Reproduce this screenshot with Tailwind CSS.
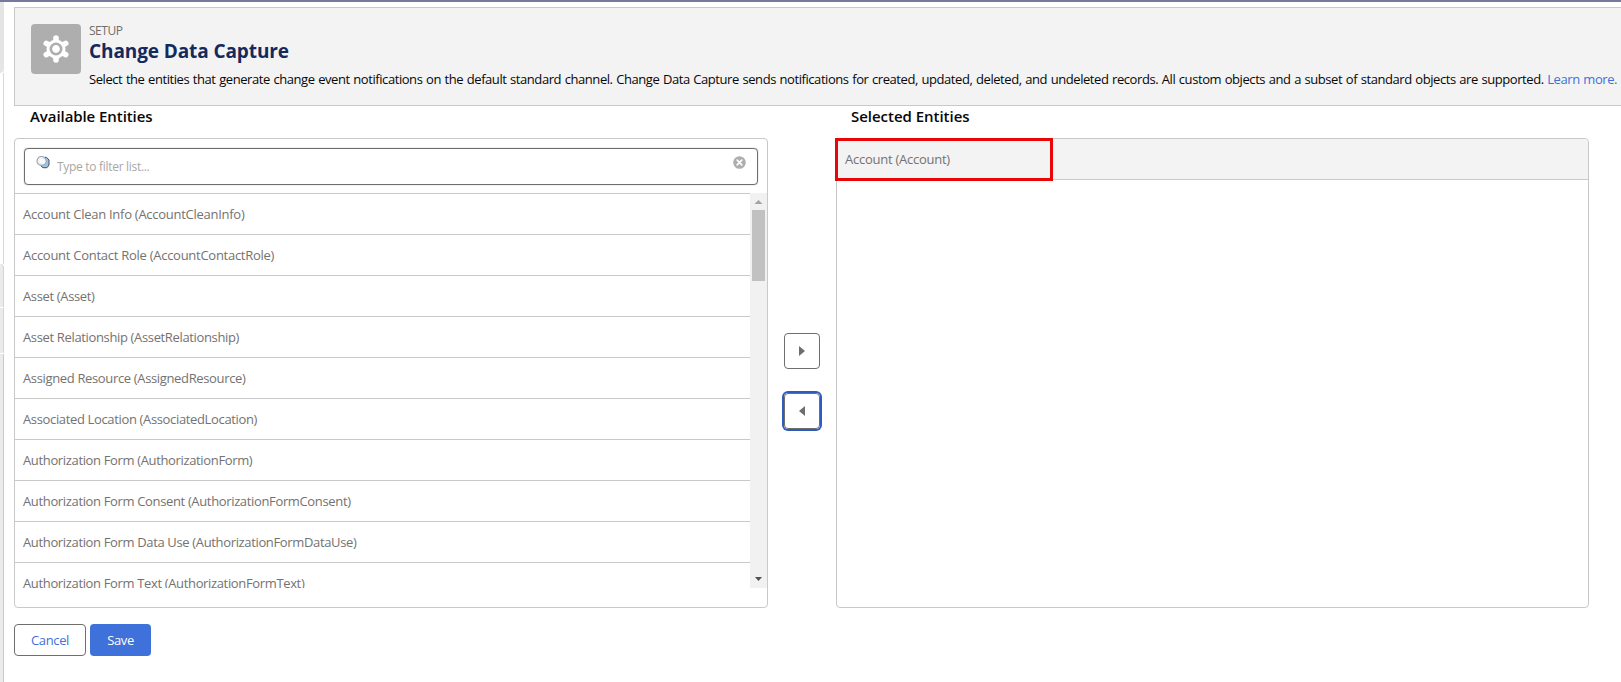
<!DOCTYPE html>
<html lang="en">
<head>
  <meta charset="UTF-8" />
  <meta name="viewport" content="width=device-width, initial-scale=1.0" />
  <script src="https://cdn.jsdelivr.net/npm/@tailwindcss/browser@4"></script>
  <title>Change Data Capture</title>
</head>
<body class="h-[682px] overflow-hidden flex flex-col bg-white font-['Open_Sans','Noto_Sans',sans-serif] text-[13px] leading-5 tracking-[-0.35px] text-[#080707] border-t-2 border-[#75789f]">

  <div class="flex flex-1 min-h-0">

    <!-- Edge of the setup tree -->
    <div class="w-1 shrink-0 flex flex-col">
      <div class="h-[71px] bg-[#e5e5e5] rounded-br-sm"></div>
      <div class="h-[191px] border-r border-[#d8d8dc]"></div>
      <div class="h-[43px] bg-[#ebebeb] border-r border-[#d4d4d4] rounded-tr-sm"></div>
      <div class="h-[45px] mt-px bg-[#ebebeb] border-r border-[#d4d4d4]"></div>
      <div class="flex-1 mt-px bg-[#ebebeb] border-r border-[#c9c9c9]"></div>
    </div>

    <main class="flex-1 min-w-0 pl-[10px] pt-[5px]">

      <!-- Page header -->
      <header class="h-[99px] flex gap-2 pl-4 pt-4 bg-[#f3f3f3] border border-r-0 border-[#c9c9c9]">
        <div class="size-[50px] shrink-0 rounded bg-[#aeaeae] flex items-center justify-center">
          <svg class="size-[28px]" viewBox="-14 -14 28 28">
            <circle r="9.500" fill="#fff" />
            <path d="M0-11V11M-9.700-5.600L9.700 5.600M-9.700 5.600L9.700-5.600" stroke="#fff" stroke-width="5.600" stroke-linecap="round" />
            <circle r="5.200" fill="none" stroke="#aeaeae" stroke-width="2.600" />
          </svg>
        </div>
        <div class="whitespace-nowrap">
          <p class="text-[12px] leading-[14px] tracking-[-0.46px] text-[#706e6b]">SETUP</p>
          <h1 class="text-[19px] leading-[24px] pt-px tracking-[-0.1px] font-bold text-[#16295c]">Change Data Capture</h1>
          <p class="mt-[6px] tracking-[-0.43px] [word-spacing:0.64px]">Select the entities that generate change event notifications on the default standard channel. Change Data Capture sends notifications for created, updated, deleted, and undeleted records. All custom objects and a subset of standard objects are supported. <a href="#" class="text-[#3e71d9]">Learn more.</a></p>
        </div>
      </header>

      <div class="flex">

        <!-- Available entities -->
        <section class="w-[754px]">
          <h2 class="h-8 pl-4 text-[15px] leading-[20px] tracking-[-0.074px] font-semibold">Available Entities</h2>
          <div class="h-[470px] border border-[#c9c9c9] rounded">
            <div class="h-[54px] px-[9px] pt-[9px]">
              <div class="h-[37px] flex items-start border border-[#706e6b] rounded shadow-[0_0_1px_#706e6b] pl-[11px] pr-[11px]">
                <svg class="w-[14px] h-[13px] mt-[7px] shrink-0" viewBox="0 0 14 13">
                  <path d="M7 1.500h3.500l2.500 2.500v5l-2 2.500H7L4.500 9z" fill="#9cc3e4" />
                  <path d="M8.500 1.300h2L13 4v5l-2 2.700H7L4.500 9.500" fill="none" stroke="#46505a" stroke-width="1" />
                  <circle cx="5.500" cy="5" r="4.500" fill="#e4eef6" fill-opacity=".6" stroke="#a5a5a5" stroke-width="1.200" />
                  <circle cx="6.800" cy="5.300" r="2.700" fill="#f8fbfd" />
                </svg>
                <span class="flex-1 pl-[7px] pt-2 text-[12px] leading-5 tracking-[-0.3px] text-[#a9a7a4]">Type to filter list...</span>
                <svg class="size-[13px] mt-[7px]" viewBox="0 0 13 13">
                  <circle cx="6.500" cy="6.500" r="6.300" fill="#aeaeae" />
                  <path d="M4.200 4.200l4.600 4.600M8.800 4.200L4.200 8.800" stroke="#fff" stroke-width="1.700" stroke-linecap="round" />
                </svg>
              </div>
            </div>
            <div class="h-[395px] flex overflow-hidden">
              <ul id="available" class="flex-1 text-[#747270]"></ul>
              <!-- Scrollbar -->
              <div class="w-[17px] bg-[#f1f1f1] flex flex-col items-center">
                <svg class="h-[17px] w-[17px] shrink-0" viewBox="0 0 17 17"><path d="M4.500 11h8l-4-4z" fill="#a3a3a3" /></svg>
                <div class="w-[13px] h-[71px] bg-[#c1c1c1]"></div>
                <svg class="h-[17px] w-[17px] shrink-0 mt-auto" viewBox="0 0 17 17"><path d="M5 6h7l-3.500 4z" fill="#505050" /></svg>
              </div>
            </div>
          </div>
        </section>

        <!-- Move buttons -->
        <div class="w-[68px] pt-[227px] flex flex-col items-center gap-6">
          <button class="size-9 pr-px border border-[#706e6b] rounded flex items-center justify-center">
            <svg class="w-[6px] h-[10px]" viewBox="0 0 6 10"><path d="M0 0l6 5-6 5z" fill="#706e6b" /></svg>
          </button>
          <button class="size-9 border border-[#706e6b] rounded ring-2 ring-[#2e5bbf] flex items-center justify-center">
            <svg class="w-[6px] h-[10px]" viewBox="0 0 6 10"><path d="M6 0L0 5l6 5z" fill="#706e6b" /></svg>
          </button>
        </div>

        <!-- Selected entities -->
        <section class="w-[753px]">
          <h2 class="h-8 pl-[15px] text-[15px] leading-[20px] tracking-[-0.03px] font-semibold">Selected Entities</h2>
          <div class="relative h-[470px] border border-[#c9c9c9] rounded">
            <p class="h-[41px] pl-2 leading-10 tracking-[-0.25px] rounded-t bg-[#f3f3f3] border-b border-[#c9c9c9] text-[#747270]">Account (Account)</p>
            <div class="absolute -left-[2px] -top-px w-[218px] h-[43px] border-[3px] border-[#ea0606]"></div>
          </div>
        </section>
      </div>

      <div class="flex gap-1 mt-4">
        <button class="w-[72px] h-8 border border-[#706e6b] rounded text-[#3e71d9]">Cancel</button>
        <button class="w-[61px] h-8 rounded bg-[#3e71d9] text-white">Save</button>
      </div>
    </main>
  </div>

  <script>
    const entities = [
      "Account Clean Info (AccountCleanInfo)",
      "Account Contact Role (AccountContactRole)",
      "Asset (Asset)",
      "Asset Relationship (AssetRelationship)",
      "Assigned Resource (AssignedResource)",
      "Associated Location (AssociatedLocation)",
      "Authorization Form (AuthorizationForm)",
      "Authorization Form Consent (AuthorizationFormConsent)",
      "Authorization Form Data Use (AuthorizationFormDataUse)",
      "Authorization Form Text (AuthorizationFormText)"
    ];
    const list = document.getElementById("available");

    entities.forEach(name => {
      const li = document.createElement("li");
      li.className = "h-[41px] pl-2 leading-10 border-t border-[#c9c9c9]";
      if (name.startsWith("Account")) li.classList.add("tracking-[-0.27px]");
      li.textContent = name;
      list.appendChild(li);
    });
  </script>
</body>
</html>
